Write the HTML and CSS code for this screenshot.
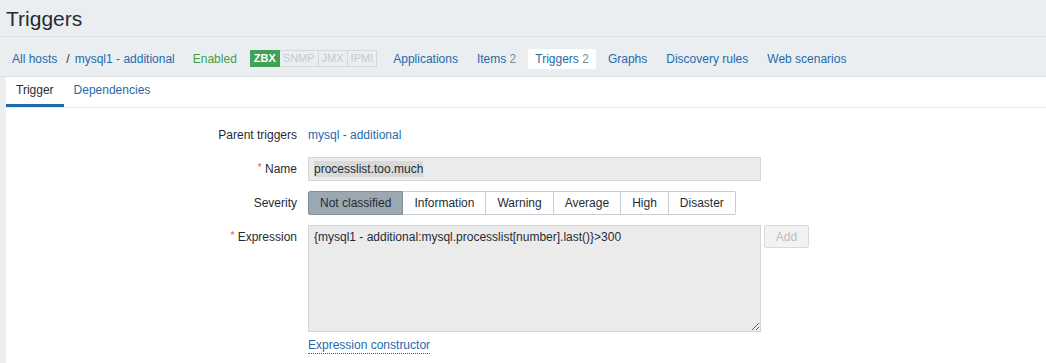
FILE: index.html
```html
<!DOCTYPE html>
<html lang="en">
<head>
    <meta charset="UTF-8">
    <title>Triggers</title>
    <link rel="stylesheet" href="styles.css">
</head>
<body>

    <header class="page-header">
        <h1>Triggers</h1>
    </header>

    <!-- Host navigation -->
    <nav class="host-nav">
        <a class="crumb" href="#">All hosts</a>
        <span class="crumb-sep">/</span>
        <a class="crumb" href="#">mysql1 - additional</a>
        <span class="status-on">Enabled</span>
        <span class="badges">
            <span class="badge badge-on">ZBX</span><span class="badge">SNMP</span><span class="badge">JMX</span><span class="badge">IPMI</span>
        </span>
        <a class="nav-item" href="#">Applications</a>
        <a class="nav-item" href="#">Items <sup>2</sup></a>
        <a class="nav-item selected" href="#">Triggers <sup>2</sup></a>
        <a class="nav-item" href="#">Graphs</a>
        <a class="nav-item" href="#">Discovery rules</a>
        <a class="nav-item" href="#">Web scenarios</a>
    </nav>

    <main class="content">
        <ul class="tabs">
            <li class="tab active">Trigger</li>
            <li class="tab"><a href="#">Dependencies</a></li>
        </ul>

        <div class="form-grid">
            <div class="form-label">Parent triggers</div>
            <div class="form-field"><a class="link" href="#">mysql - additional</a></div>

            <div class="form-label"><span class="asterisk">*</span> Name</div>
            <div class="form-field">
                <div class="textbox"><span class="selection">processlist.too.much</span></div>
            </div>

            <div class="form-label">Severity</div>
            <div class="form-field">
                <div class="radio-segmented">
                    <span class="seg checked">Not classified</span>
                    <span class="seg">Information</span>
                    <span class="seg">Warning</span>
                    <span class="seg">Average</span>
                    <span class="seg">High</span>
                    <span class="seg">Disaster</span>
                </div>
            </div>

            <div class="form-label"><span class="asterisk">*</span> Expression</div>
            <div class="form-field">
                <div class="expr-row">
                    <textarea class="expr" readonly>{mysql1 - additional:mysql.processlist[number].last()}>300</textarea>
                    <button class="btn-alt" disabled>Add</button>
                </div>
                <a class="link-action" href="#">Expression constructor</a>
            </div>
        </div>
    </main>

</body>
</html>
```

FILE: styles.css
```css
body {
    margin: 0;
    padding: 0;
    background-color: #ebeef1;
    font-family: 'Liberation Sans', Arial, sans-serif;
    font-size: 12px;
    color: #1f2c33;
}

a {
    color: #1f6aab;
    text-decoration: none;
}

.page-header {
    height: 37px;
    padding: 0 6px;
    border-bottom: 1px solid #dde2e6;
    box-sizing: border-box;
}

.page-header h1 {
    margin: 0;
    padding-top: 2px;
    font-size: 21px;
    font-weight: normal;
    line-height: 34px;
}

.host-nav {
    display: flex;
    align-items: center;
    height: 40px;
    padding: 4px 12px 0;
    border-bottom: 1px solid #dde2e6;
    box-sizing: border-box;
}

.crumb-sep {
    margin: 0 5px 0 9px;
}

.status-on {
    margin-left: 18px;
    color: #429e47;
}

.badges {
    display: flex;
    margin: 0 6px 0 13px;
}

.badge {
    height: 15px;
    line-height: 15px;
    padding: 0 3px;
    border: 1px solid #d3d8dc;
    border-left: none;
    font-size: 11px;
    color: #c3cacf;
}

.badge:first-child {
    border-left: 1px solid #d3d8dc;
}

.badge-on {
    background-color: #3fa254;
    border-color: #3fa254 !important;
    color: #ffffff;
    font-weight: bold;
}

.nav-item {
    padding: 3px 7px;
    margin: 0 2px 0 3px;
    line-height: 14px;
    border-radius: 2px;
}

.nav-item sup {
    vertical-align: baseline;
    font-size: 12px;
    color: #768d99;
}

.nav-item.selected {
    background-color: #ffffff;
}

.content {
    margin-left: 6px;
    background-color: #ffffff;
    min-height: 300px;
}

.tabs {
    display: flex;
    margin: 0;
    padding: 0;
    list-style: none;
    border-bottom: 1px solid #e6e9eb;
}

.tab {
    padding: 0 10px;
    line-height: 27px;
    border-bottom: 3px solid transparent;
}

.tab.active {
    border-bottom-color: #1f6aab;
}

.form-grid {
    display: grid;
    grid-template-columns: 291px 1fr;
    column-gap: 11px;
    row-gap: 10px;
    padding-top: 15px;
}

.form-label {
    text-align: right;
    line-height: 24px;
}

.form-field {
    line-height: 24px;
}

.asterisk {
    color: #e45959;
    font-size: 10px;
    vertical-align: top;
    position: relative;
    top: -1px;
}

.textbox {
    width: 453px;
    height: 24px;
    padding: 0 5px;
    box-sizing: border-box;
    background-color: #ebebeb;
    border: 1px solid #d5d5d5;
    line-height: 22px;
}

.selection {
    background-color: #d9d9d9;
    padding: 1px 0;
}

.radio-segmented {
    display: inline-flex;
    height: 24px;
}

.seg {
    padding: 0 11px;
    line-height: 22px;
    border: 1px solid #c6ced3;
    border-left: none;
    background-color: #ffffff;
}

.seg:first-child {
    border-left: 1px solid #7f8f9b;
    border-radius: 2px 0 0 2px;
}

.seg:last-child {
    border-radius: 0 2px 2px 0;
}

.seg.checked {
    background-color: #9ba8b2;
    border-color: #7f8f9b;
}

.expr-row {
    display: flex;
    align-items: flex-start;
    gap: 3px;
}

.expr {
    width: 453px;
    height: 107px;
    margin: 0;
    padding: 3px 5px;
    box-sizing: border-box;
    background-color: #ebebeb;
    border: 1px solid #d5d5d5;
    font-family: 'Liberation Sans', Arial, sans-serif;
    font-size: 12px;
    line-height: 16px;
    color: #1f2c33;
}

.btn-alt {
    width: 45px;
    height: 23px;
    padding: 0;
    background-color: #f2f2f2;
    border: 1px solid #dadada;
    border-radius: 2px;
    font-family: 'Liberation Sans', Arial, sans-serif;
    font-size: 12px;
    color: #b7bec3;
}

.link-action {
    display: inline-block;
    margin-top: 6px;
    line-height: 15px;
    border-bottom: 1px dotted #1f6aab;
}
```
